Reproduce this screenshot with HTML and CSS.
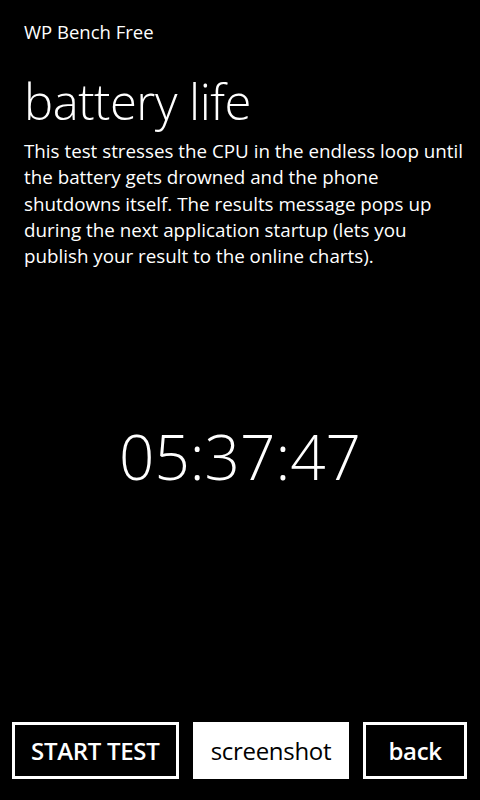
FILE: index.html
```html
<!DOCTYPE html>
<html lang="en">
<head>
    <meta charset="UTF-8">
    <meta name="viewport" content="width=device-width, initial-scale=1.0">
    <title>WP Bench Free</title>
    <link rel="stylesheet" href="styles.css">
</head>
<body>
    <div class="page">
        <header>
            <div class="app-title">WP Bench Free</div>
            <h1 class="page-title">battery life</h1>
        </header>

        <p class="description">This test stresses the CPU in the endless loop until the battery gets drowned and the phone shutdowns itself. The results message pops up during the next application startup (lets you publish your result to the online charts).</p>

        <div class="timer">05:37:47</div>

        <div class="buttons">
            <button class="btn btn-start">START TEST</button>
            <button class="btn btn-filled">screenshot</button>
            <button class="btn btn-back">back</button>
        </div>
    </div>
</body>
</html>
```

FILE: styles.css
```css
* {
    margin: 0;
    padding: 0;
    box-sizing: border-box;
}

body {
    background-color: #000;
    color: #fff;
    font-family: 'Open Sans', 'Noto Sans', sans-serif;
}

.page {
    height: 800px;
    display: flex;
    flex-direction: column;
}

header {
    padding: 19px 24px 0;
}

.app-title {
    font-size: 18.5px;
    line-height: 26px;
}

.page-title {
    font-size: 49px;
    font-weight: 300;
    line-height: 58px;
    margin-top: 27px;
    letter-spacing: -0.5px;
}

.description {
    padding: 0 16px 0 24px;
    font-size: 18.8px;
    line-height: 26.3px;
    margin-top: 8px;
}

.timer {
    text-align: center;
    font-size: 62px;
    font-weight: 300;
    line-height: 80px;
    margin-top: 147px;
}

.buttons {
    display: flex;
    gap: 14px;
    padding: 0 13px 21px 12px;
    margin-top: auto;
}

.btn {
    height: 57px;
    border: 3px solid #fff;
    background: #000;
    color: #fff;
    font-family: inherit;
    font-size: 24px;
    font-weight: 600;
    letter-spacing: -0.3px;
}

.btn-start {
    width: 167px;
}

.btn-filled {
    width: 157px;
    background: #fff;
    color: #000;
    font-weight: 400;
}

.btn-back {
    width: 104px;
}
```
